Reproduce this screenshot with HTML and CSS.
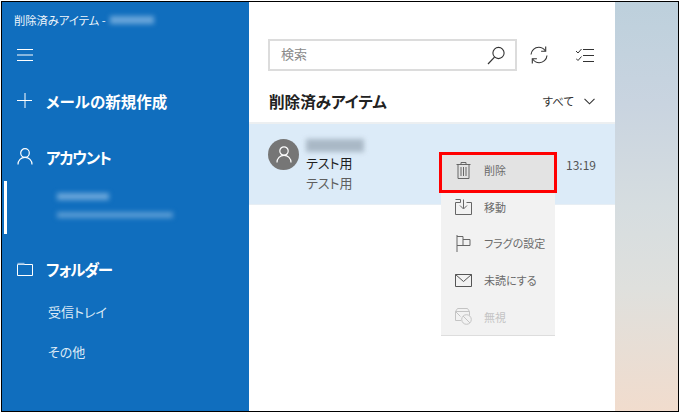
FILE: index.html
```html
<!DOCTYPE html>
<html lang="ja">
<head>
<meta charset="utf-8">
<title>削除済みアイテム</title>
<link rel="stylesheet" href="styles.css">
</head>
<body>
<div class="frame">
  <aside class="sidebar">
    <div class="titlebar"><span>削除済みアイテム -</span><i class="smear smear-title"></i></div>
    <div class="nav-row hamburger">
      <svg class="ico" width="16" height="14" viewBox="0 0 16 14"><path d="M0 1.5h16M0 7h16M0 12.5h16" stroke="#fff" fill="none"/></svg>
    </div>
    <div class="nav-row compose">
      <svg class="ico" width="16" height="16" viewBox="0 0 16 16"><path d="M8 0v15M0 7.5h15" stroke="#fff" fill="none"/></svg>
      <span class="nav-label">メールの新規作成</span>
    </div>
    <div class="nav-row account">
      <svg class="ico" width="16" height="17" viewBox="0 0 16 17"><circle cx="8" cy="5" r="4.3" stroke="#fff" fill="none" stroke-width="1.2"/><path d="M1 16.5c0-4.2 3-7.2 7-7.2s7 3 7 7.2" stroke="#fff" fill="none" stroke-width="1.2"/></svg>
      <span class="nav-label tight">アカウント</span>
    </div>
    <div class="account-item">
      <i class="smear smear-name"></i>
      <i class="smear smear-mail"></i>
    </div>
    <div class="nav-row folders">
      <svg class="ico" width="16" height="14" viewBox="0 0 16 14"><path d="M.5 2.5h15v11H.5z" stroke="#fff" fill="none"/><path d="M.5 .8h7v1.7h-7z" fill="#8db9e0"/></svg>
      <span class="nav-label tight">フォルダー</span>
    </div>
    <div class="folder first">受信トレイ</div>
    <div class="folder">その他</div>
  </aside>

  <main class="list">
    <div class="toolbar">
      <div class="search">
        <span class="placeholder">検索</span>
        <svg width="19" height="19" viewBox="0 0 19 19"><circle cx="11.5" cy="7" r="5.6" stroke="#333" fill="none" stroke-width="1.1"/><path d="M7.5 11.2L1 18" stroke="#333" fill="none" stroke-width="1.2"/></svg>
      </div>
      <svg class="tool sync" width="18" height="18" viewBox="0 0 18 18"><path d="M1 8.5C1.400 4.200 4.700 1.300 8.800 1.300c2.600 0 4.800 1.200 6.400 3.400M17 9.500c-.4 4.300-3.700 7.200-7.800 7.200-2.600 0-4.800-1.200-6.400-3.400" stroke="#333" fill="none" stroke-width="1.1"/><path d="M15.700 .6v4.600h-4.600M2.300 17.400v-4.600h4.600" stroke="#333" fill="none" stroke-width="1.1"/></svg>
      <svg class="tool select" width="18" height="15" viewBox="0 0 18 15"><path d="M0 3l2 2 3.500-4M0 10.500l2 2 3.500-4" stroke="#333" fill="none"/><path d="M7 1.500h11M7 7.500h11M7 13.500h11" stroke="#333" fill="none"/></svg>
    </div>
    <div class="heading">
      <h1>削除済みアイテム</h1>
      <div class="filter"><span>すべて</span>
        <svg width="11" height="7" viewBox="0 0 11 7"><path d="M.5 .8l5 5 5-5" stroke="#333" fill="none" stroke-width="1.1"/></svg>
      </div>
    </div>
    <div class="message">
      <div class="avatar">
        <svg width="16" height="17" viewBox="0 0 16 17"><circle cx="8" cy="5" r="4.200" stroke="#fff" fill="none" stroke-width="1.2"/><path d="M1 16.500c0-4.200 3-7.200 7-7.200s7 3 7 7.200" stroke="#fff" fill="none" stroke-width="1.2"/></svg>
      </div>
      <div class="msg-text">
        <i class="smear smear-sender"></i>
        <div class="subject">テスト用</div>
        <div class="preview">テスト用</div>
      </div>
      <div class="time">13:19</div>
    </div>
  </main>

  <div class="wallpaper"></div>

  <ul class="menu">
    <li class="menu-item active">
      <svg width="14" height="17" viewBox="0 0 14 17"><path d="M0 2.500h14M4.500 2.500V.5h5v2M1.500 2.500v14h11v-14M4.500 5v9M7 5v9M9.500 5v9" stroke="#666" fill="none"/></svg>
      <span>削除</span>
    </li>
    <li class="menu-item">
      <svg width="17" height="16" viewBox="0 0 17 16"><path d="M5.500 3.500H.5v12h16v-12h-5M8.500 .5v9M5 6.500l3.500 3.500 3.500-3.500M.5 .5h5v3" stroke="#666" fill="none"/></svg>
      <span>移動</span>
    </li>
    <li class="menu-item">
      <svg width="14" height="17" viewBox="0 0 14 17"><path d="M.5 0v17M.5 1.500h6v9h-6M6.500 4.500h7v6h-7" stroke="#666" fill="none"/></svg>
      <span>フラグの設定</span>
    </li>
    <li class="menu-item">
      <svg width="17" height="13" viewBox="0 0 17 13"><path d="M.5 .5h16v12H.5zM.5 .5l8 7 8-7" stroke="#555" fill="none"/></svg>
      <span>未読にする</span>
    </li>
    <li class="menu-item disabled">
      <svg width="17" height="17" viewBox="0 0 17 17"><path d="M6 12.500H.5v-9h14v4M.5 3.500l2-3h10l2 3M.5 3.500l5 5" stroke="#c4c4c4" fill="none"/><circle cx="11.500" cy="11.500" r="4.800" stroke="#c4c4c4" fill="none"/><path d="M8 8l7 7" stroke="#c4c4c4"/></svg>
      <span>無視</span>
    </li>
  </ul>
</div>
</body>
</html>
```

FILE: styles.css
```css
* { box-sizing: border-box; }
html, body { margin: 0; padding: 0; background: #fff; }
body { width: 680px; height: 413px; padding: 1px; font-family: "Noto Sans CJK JP", "Noto Sans", sans-serif; font-feature-settings: "palt"; overflow: hidden; }

.frame {
  position: relative;
  display: flex;
  width: 678px;
  height: 411px;
  border: 1px solid #000;
  overflow: hidden;
}

.smear { display: block; filter: blur(2.5px); }

.sidebar { flex: 0 0 247px; background: #106ebe; color: #fff; display: flex; flex-direction: column; }
.titlebar { display: flex; align-items: center; height: 34px; padding: 2px 0 0 12px; font-size: 11.300px; color: #eef5fb; gap: 4px; }
.smear-title { width: 44px; height: 8px; background: #6aa6da; }

.nav-row { display: flex; align-items: center; padding-left: 15px; }
.nav-row .ico { flex: none; }
.nav-label { font-size: 15.500px; font-weight: 700; margin-left: 13px; }
.nav-label.tight { letter-spacing: -1.200px; }
.hamburger { height: 38px; }
.compose { height: 41px; margin-top: 6px; }
.account { height: 41px; margin-top: 15px; }

.account-item { height: 53px; margin: 4px 0 0 2px; padding: 12px 0 0 50px; display: flex; flex-direction: column; gap: 12px; border-left: 3px solid #fff; }
.smear-name { width: 52px; height: 7px; background: #6aa6da; }
.smear-mail { width: 116px; height: 6px; background: #5a9cd4; }

.folders { height: 40px; margin-top: 15px; }
.folder { font-size: 13px; color: #dceaf6; padding-left: 46px; height: 40px; line-height: 40px; }
.folder.first { margin-top: 3px; }

.list { flex: 0 0 366px; background: #fff; display: flex; flex-direction: column; }
.toolbar { display: flex; align-items: center; height: 32px; margin: 37px 0 0 19px; }
.search { display: flex; align-items: center; justify-content: space-between; width: 249px; height: 32px; border: 2px solid #dcdcdc; padding: 0 9px 0 11px; font-size: 13px; color: #8a8a8a; }
.placeholder { padding-bottom: 3px; }
.tool { flex: none; }
.sync { margin-left: 13px; }
.select { margin-left: 28px; }

.heading { display: flex; align-items: center; justify-content: space-between; height: 51px; padding: 9px 20px 0 20px; }
.heading h1 { margin: 0; font-size: 15.600px; font-weight: 700; color: #222; }
.filter { display: flex; align-items: center; gap: 10px; font-size: 11.500px; color: #333; }

.message { display: flex; background: #dcebf8; height: 83px; border-top: 2px solid #eceff1; border-bottom: 1px solid #e7eef4; padding: 15px 19px 0; }
.avatar { flex: none; width: 31px; height: 31px; border-radius: 50%; background: #767676; display: flex; align-items: center; justify-content: center; }
.msg-text { flex: 1; padding-left: 7px; }
.smear-sender { width: 58px; height: 13px; margin: 0 0 1px; background: #a9b8c6; }
.subject { font-size: 13px; line-height: 20px; color: #1f1f1f; }
.preview { font-size: 13px; line-height: 20px; color: #5f5f5f; }
.time { font-size: 12px; color: #555; margin-top: 17px; }

.wallpaper { flex: 1; background: linear-gradient(#bdd0dc 0%, #c9d4e0 25%, #d6dde0 50%, #dfe0dd 70%, #f1dccd 100%); }

.menu {
  position: absolute;
  left: 439px;
  top: 150px;
  width: 114px;
  margin: 0;
  padding: 0;
  list-style: none;
  background: #f2f2f2;
  border-bottom: 1px solid #ddd;
}
.menu-item { position: relative; display: flex; align-items: center; height: 36.600px; padding-left: 14px; font-size: 11px; color: #6a6a6a; }
.menu-item svg, .menu-item span { position: relative; z-index: 1; }
.menu-item svg { flex: 0 0 auto; width: 17px; margin-right: 12px; }
.menu-item.active::before {
  content: "";
  position: absolute;
  top: 0;
  left: -2px;
  right: -2px;
  bottom: -4px;
  background: #e3e3e3;
  border: 3px solid #f00;
}
.menu-item.disabled { color: #c4c4c4; }
```
